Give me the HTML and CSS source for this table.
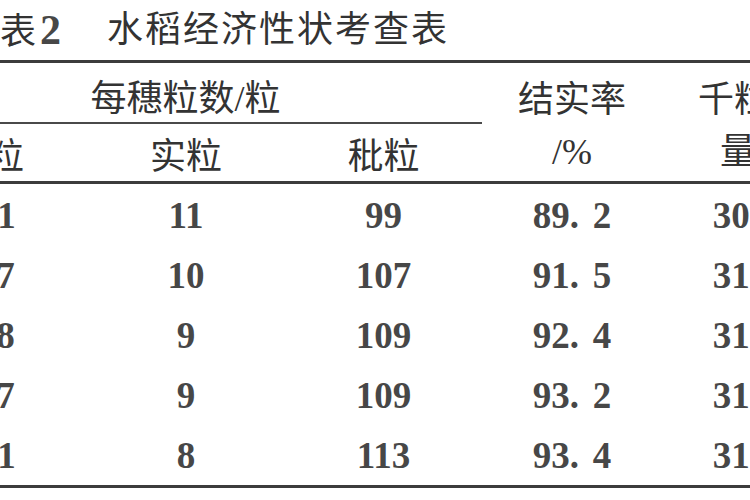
FILE: index.html
```html
<!DOCTYPE html>
<html lang="zh">
<head>
<meta charset="utf-8">
<title>表2 水稻经济性状考查表</title>
<link rel="stylesheet" href="styles.css">
</head>
<body>
<div class="page">
  <h1 class="title"><span class="tno">表<span class="num">2</span></span><span class="tname">水稻经济性状考查表</span></h1>
  <div class="table">
    <div class="thead">
      <div class="grp">每穗粒数/粒</div>
      <div class="hcell rate"><span>结实率</span><span>/%</span></div>
      <div class="hcell kgw"><span>千粒质</span><span>量/g</span></div>
      <div class="sub">总粒</div>
      <div class="sub">实粒</div>
      <div class="sub">秕粒</div>
    </div>
    <div class="tbody">
      <div class="row"><span>101</span><span>11</span><span>99</span><span>89. 2</span><span>30. 5</span></div>
      <div class="row"><span>117</span><span>10</span><span>107</span><span>91. 5</span><span>31. 2</span></div>
      <div class="row"><span>118</span><span>9</span><span>109</span><span>92. 4</span><span>31. 4</span></div>
      <div class="row"><span>117</span><span>9</span><span>109</span><span>93. 2</span><span>31. 6</span></div>
      <div class="row"><span>121</span><span>8</span><span>113</span><span>93. 4</span><span>31. 8</span></div>
    </div>
  </div>
</div>
</body>
</html>
```

FILE: styles.css
```css
html, body {
  margin: 0;
  padding: 0;
  background: #ffffff;
}

body {
  width: 750px;
  height: 500px;
  overflow: hidden;
  color: #333333;
  font-family: "Liberation Serif", "Noto Sans CJK SC", serif;
  font-size: 36px;
}

.page {
  width: 750px;
}

.title {
  margin: 0;
  height: 60px;
  line-height: 60px;
  font-size: 36px;
  font-weight: normal;
  white-space: nowrap;
  display: flex;
}

.tno {
  width: 107px;
  flex: none;
}

.tno .num {
  margin-left: 4px;
  font-size: 42px;
  font-weight: bold;
  color: #474747;
}

.tname {
  letter-spacing: 2px;
}

.table {
  width: 953px;
  margin-left: -111px;
  border-top: 3px solid #3c3c3c;
  border-bottom: 3px solid #3c3c3c;
}

.thead {
  display: grid;
  grid-template-columns: 198px 198px 197px 180px 180px;
  grid-template-rows: 61px 57px;
  border-bottom: 3px solid #3c3c3c;
}

.grp {
  grid-column: 1 / 4;
  grid-row: 1;
  border-bottom: 2px solid #4a4a4a;
  display: flex;
  align-items: center;
  justify-content: center;
  padding-top: 4px;
  box-sizing: border-box;
}

.hcell {
  grid-row: 1 / 3;
  display: flex;
  flex-direction: column;
  align-items: center;
  justify-content: center;
  line-height: 52px;
  padding-top: 8px;
  box-sizing: border-box;
}

.rate {
  grid-column: 4;
}

.kgw {
  grid-column: 5;
}

.sub {
  grid-row: 2;
  display: flex;
  align-items: center;
  justify-content: center;
}

.tbody {
  padding-top: 1px;
}

.row {
  display: grid;
  grid-template-columns: 198px 198px 197px 180px 180px;
  height: 60px;
  align-items: center;
  justify-items: center;
  font-size: 37px;
  font-weight: bold;
  color: #474747;
  word-spacing: 0.12em;
}
```
